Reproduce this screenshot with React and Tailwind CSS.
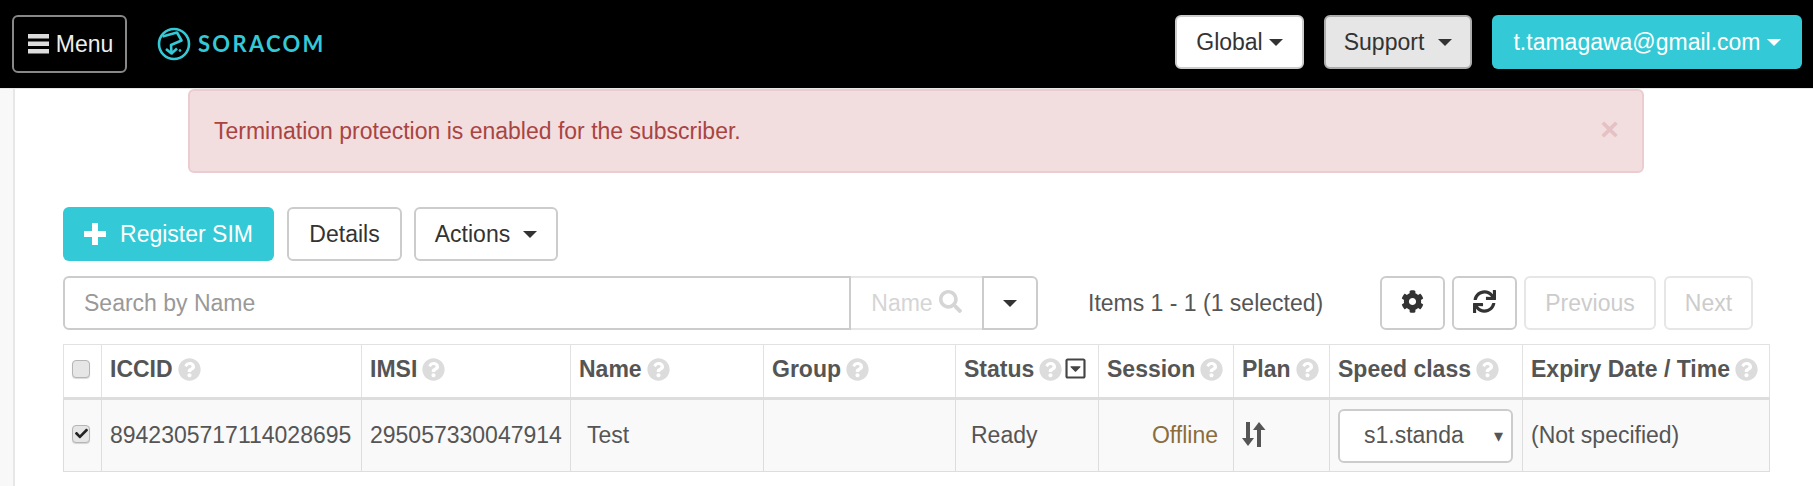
import { FaSearch, FaCog, FaSync, FaQuestionCircle, FaRegCaretSquareDown, FaCheck } from 'react-icons/fa';

const Caret = ({ className = 'border-t-[#333]' }) => (
  <span className={`inline-block w-0 h-0 border-x-[7px] border-x-transparent border-t-[7px] ${className}`}></span>
);

const Help = () => <FaQuestionCircle className="inline-block text-[#dcdcdc] text-[23px] shrink-0" />;

const Logo = () => (
  <svg width="34" height="34" viewBox="0 0 34 34" fill="none" stroke="#34c9d6" strokeWidth="2.600" className="shrink-0">
    <circle cx="17" cy="17" r="15" />
    <path d="M5.500 9.500 L20 5.500 L24.500 13.500 L14 18 L14.500 26.500 L9 22" strokeLinejoin="round" />
    <path d="M14.500 26.500 L20 21.500" />
    <circle cx="23" cy="23.500" r="0.900" fill="#34c9d6" strokeWidth="1" />
  </svg>
);

const SortIcon = () => (
  <svg width="24" height="25" viewBox="0 0 24 25" fill="#555" className="-mt-[3px]">
    <path d="M4 0h4v16h4L6 24 0 16h4z" />
    <path d="M15 25h4V8h4.500L17 0l-6 8h4z" />
  </svg>
);

const PlusIcon = () => (
  <svg width="22" height="22" viewBox="0 0 22 22" fill="currentColor">
    <path d="M8 0h6v8h8v6h-8v8H8v-8H0V8h8z" />
  </svg>
);

const BarsIcon = () => (
  <svg width="21" height="20" viewBox="0 0 21 20" fill="#ddd">
    <rect y="0" width="21" height="4.500" />
    <rect y="7.500" width="21" height="4.500" />
    <rect y="15" width="21" height="4.500" />
  </svg>
);

const Checkbox = ({ checked }) => (
  <span className="flex items-center justify-center w-[18px] h-[18px] -mt-[4px] rounded-[4px] border border-[#b5b5b5] bg-[#e6e6e6] shadow-[0_1px_1px_rgba(0,0,0,0.15)]">
    {checked && <FaCheck className="text-[13px] text-[#222]" />}
  </span>
);

const columns = [
  { title: null, width: 'w-[38px]' },
  { title: 'ICCID', width: 'w-[260px]' },
  { title: 'IMSI', width: 'w-[209px]' },
  { title: 'Name', width: 'w-[193px]' },
  { title: 'Group', width: 'w-[192px]' },
  { title: 'Status', width: 'w-[143px]', sort: true },
  { title: 'Session', width: 'w-[135px]' },
  { title: 'Plan', width: 'w-[96px]' },
  { title: 'Speed class', width: 'w-[193px]' },
  { title: 'Expiry Date / Time', width: 'w-[247px]' },
];

const App = () => {
  const btn = 'flex items-center justify-center h-[54px] rounded-[6px] border-2 border-[#ccc] bg-white text-[#333]';
  const td = 'border border-[#ddd] p-0 align-middle';

  return (
    <div className="w-[1813px] h-[486px] overflow-hidden bg-white text-[23px] text-[#333] font-['Liberation_Sans',Arial,sans-serif]">
      <header className="flex items-center h-[88px] bg-black pl-[12px] pr-[11px]">
        <button className="flex items-center justify-center gap-[7px] pl-[2px] w-[115px] h-[58px] rounded-[6px] border-2 border-[#888] text-[#eee]">
          <BarsIcon />
          Menu
        </button>
        <div className="flex items-center ml-[30px] gap-[7px]">
          <Logo />
          <span className="text-[#34c9d6] text-[22px] font-['Lato',sans-serif] font-bold tracking-[2.300px] leading-none">SORACOM</span>
        </div>
        <div className="flex gap-[20px] ml-auto -mt-[4px]">
          <button className="flex items-center justify-center gap-[6px] w-[129px] h-[54px] rounded-[6px] border-2 border-[#ccc] bg-white text-[#333]">
            Global <Caret />
          </button>
          <button className="flex items-center justify-center gap-[14px] w-[148px] h-[54px] rounded-[6px] border-2 border-[#adadad] bg-[#e6e6e6] text-[#333]">
            Support <Caret />
          </button>
          <button className="flex items-center justify-center gap-[6px] w-[310px] h-[54px] rounded-[6px] bg-[#34c9d6] text-white">
            t.tamagawa@gmail.com <Caret className="border-t-white" />
          </button>
        </div>
      </header>

      <div className="flex h-[398px] border-t border-[#e7e7e7]">
        <aside className="w-[15px] shrink-0 bg-[#f8f8f8] border-r-2 border-[#e7e7e7]"></aside>
        <main className="flex-1 min-w-0">
          <div className="flex items-center justify-between w-[1456px] h-[84px] ml-[173px] pl-[24px] pr-[23px] rounded-[6px] border-2 border-[#ebccd1] bg-[#f2dede] text-[#a94442]">
            <span>Termination protection is enabled for the subscriber.</span>
            <span className="font-bold text-[32px] text-[#e4c1c4] leading-none -mt-[4px]">×</span>
          </div>

          <div className="ml-[48px] w-[1706px]">
            <div className="flex gap-[12px] mt-[34px]">
              <button className="flex items-center justify-center gap-[14px] w-[211px] h-[54px] rounded-[6px] bg-[#34c9d6] text-white">
                <PlusIcon />
                Register SIM
              </button>
              <button className={`${btn} w-[115px] ml-[1px]`}>Details</button>
              <button className={`${btn} w-[144px] gap-[13px]`}>
                Actions <Caret />
              </button>
            </div>

            <div className="flex items-center mt-[15px]">
              <input
                readOnly
                placeholder="Search by Name"
                className="w-[788px] h-[54px] pl-[19px] rounded-l-[6px] border-2 border-[#ccc] bg-white outline-none placeholder:text-[#999]"
              />
              <div className="flex items-center justify-center gap-[6px] w-[131px] h-[54px] border-y-2 border-[#e6e6e6] text-[#d5d5d5]">
                Name <FaSearch className="text-[23px] -mt-[3px]" />
              </div>
              <button className="flex items-center justify-center w-[56px] h-[54px] rounded-r-[6px] border-2 border-[#ccc] bg-white">
                <Caret />
              </button>
              <span className="ml-[50px] text-[#555]">Items 1 - 1 (1 selected)</span>
              <div className="flex gap-[7px] ml-auto mr-[16px]">
                <button className={`${btn} w-[65px]`}><FaCog className="text-[23px] text-[#333] -mt-[3px]" /></button>
                <button className={`${btn} w-[65px]`}><FaSync className="text-[23px] text-[#333] -mt-[3px]" /></button>
                <button className="flex items-center justify-center w-[132px] h-[54px] rounded-[6px] border-2 border-[#e6e6e6] text-[#ccc]">Previous</button>
                <button className="flex items-center justify-center w-[89px] h-[54px] ml-[1px] rounded-[6px] border-2 border-[#e6e6e6] text-[#ccc]">Next</button>
              </div>
            </div>

            <table className="table-fixed w-[1706px] mt-[14px] border-collapse text-[#555]">
              <thead>
                <tr className="h-[54px]">
                  {columns.map((col, i) => (
                    <th key={i} className={`${col.width} border border-[#e2e2e2] border-b-[3px] border-b-[#ddd] p-0 pl-[8px] font-bold text-left align-middle`}>
                      {col.title ? (
                        <span className="flex items-center gap-[5px] whitespace-nowrap -mt-[3px]">
                          {col.title} <Help />
                          {col.sort && <FaRegCaretSquareDown className="text-[#444] text-[23px] -ml-[3px] -mt-[2px]" />}
                        </span>
                      ) : (
                        <Checkbox />
                      )}
                    </th>
                  ))}
                </tr>
              </thead>
              <tbody>
                <tr className="h-[73px] bg-[#f9f9f9]">
                  <td className={`${td} pl-[8px]`}><Checkbox checked /></td>
                  <td className={`${td} pl-[8px]`}>8942305717114028695</td>
                  <td className={`${td} pl-[8px]`}>295057330047914</td>
                  <td className={`${td} pl-[16px]`}>Test</td>
                  <td className={td}></td>
                  <td className={`${td} pl-[15px]`}>Ready</td>
                  <td className={`${td} pr-[15px] text-right text-[#8a6d3b]`}>Offline</td>
                  <td className={`${td} pl-[8px]`}><SortIcon /></td>
                  <td className={`${td} pl-[8px]`}>
                    <div className="relative w-[175px]">
                      <select className="w-[175px] h-[54px] pl-[24px] pr-[46px] rounded-[6px] border-2 border-[#ccc] bg-white text-[#555] appearance-none outline-none">
                        <option>s1.standard</option>
                      </select>
                      <span className="absolute right-[10px] top-[14px] text-[18px] text-[#555]">▾</span>
                    </div>
                  </td>
                  <td className={`${td} pl-[8px]`}>(Not specified)</td>
                </tr>
              </tbody>
            </table>
          </div>
        </main>
      </div>
    </div>
  );
};

export default App;
